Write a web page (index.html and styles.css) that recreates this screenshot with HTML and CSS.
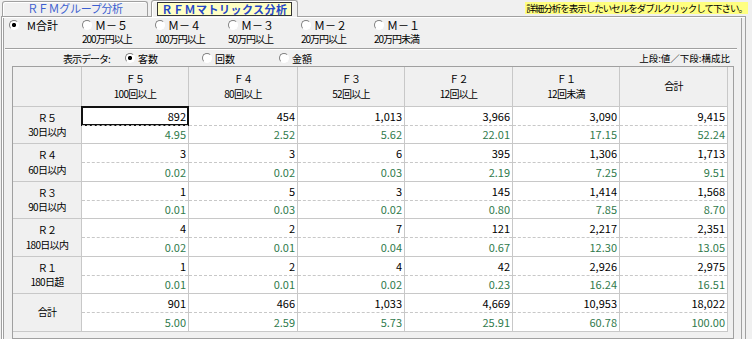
FILE: index.html
```html
<!DOCTYPE html>
<html lang="ja">

<head>
  <meta charset="UTF-8">
  <title>ＲＦＭマトリックス分析</title>
  <link rel="stylesheet" href="styles.css">
</head>

<body>

  <div class="tabs">
    <div class="tab">ＲＦＭグループ分析</div>
    <div class="tab active"><span class="tab-label">ＲＦＭマトリックス分析</span></div>
    <div class="hint">詳細分析を表示したいセルをダブルクリックして下さい。</div>
  </div>

  <div class="panel">
    <div class="m-row">
      <div class="opt first"><div class="opt-main"><span class="radio on"></span>M合計</div></div>
      <div class="opt"><div class="opt-main"><span class="radio"></span>Ｍ－５</div><small>200万円以上</small></div>
      <div class="opt"><div class="opt-main"><span class="radio"></span>Ｍ－４</div><small>100万円以上</small></div>
      <div class="opt"><div class="opt-main"><span class="radio"></span>Ｍ－３</div><small>50万円以上</small></div>
      <div class="opt"><div class="opt-main"><span class="radio"></span>Ｍ－２</div><small>20万円以上</small></div>
      <div class="opt"><div class="opt-main"><span class="radio"></span>Ｍ－１</div><small>20万円未満</small></div>
    </div>
    <div class="sep"></div>

    <div class="disp-row">
      <span class="disp-label">表示データ:</span>
      <span class="opt2"><span class="radio on"></span>客数</span>
      <span class="opt2"><span class="radio"></span>回数</span>
      <span class="opt2"><span class="radio"></span>金額</span>
      <span class="legend">上段:値／下段:構成比</span>
    </div>

    <div class="grid-box">
      <div class="matrix">
        <div class="h"></div>
        <div class="h"><span>Ｆ５</span><span>100回以上</span></div>
        <div class="h"><span>Ｆ４</span><span>80回以上</span></div>
        <div class="h"><span>Ｆ３</span><span>52回以上</span></div>
        <div class="h"><span>Ｆ２</span><span>12回以上</span></div>
        <div class="h"><span>Ｆ１</span><span>12回未満</span></div>
        <div class="h"><span>合計</span></div>

        <div class="h"><span>Ｒ５</span><span>30日以内</span></div>
        <div class="d"><div class="v sel">892</div><div class="p">4.95</div></div>
        <div class="d"><div class="v">454</div><div class="p">2.52</div></div>
        <div class="d"><div class="v">1,013</div><div class="p">5.62</div></div>
        <div class="d"><div class="v">3,966</div><div class="p">22.01</div></div>
        <div class="d"><div class="v">3,090</div><div class="p">17.15</div></div>
        <div class="d"><div class="v">9,415</div><div class="p">52.24</div></div>

        <div class="h"><span>Ｒ４</span><span>60日以内</span></div>
        <div class="d"><div class="v">3</div><div class="p">0.02</div></div>
        <div class="d"><div class="v">3</div><div class="p">0.02</div></div>
        <div class="d"><div class="v">6</div><div class="p">0.03</div></div>
        <div class="d"><div class="v">395</div><div class="p">2.19</div></div>
        <div class="d"><div class="v">1,306</div><div class="p">7.25</div></div>
        <div class="d"><div class="v">1,713</div><div class="p">9.51</div></div>

        <div class="h"><span>Ｒ３</span><span>90日以内</span></div>
        <div class="d"><div class="v">1</div><div class="p">0.01</div></div>
        <div class="d"><div class="v">5</div><div class="p">0.03</div></div>
        <div class="d"><div class="v">3</div><div class="p">0.02</div></div>
        <div class="d"><div class="v">145</div><div class="p">0.80</div></div>
        <div class="d"><div class="v">1,414</div><div class="p">7.85</div></div>
        <div class="d"><div class="v">1,568</div><div class="p">8.70</div></div>

        <div class="h"><span>Ｒ２</span><span>180日以内</span></div>
        <div class="d"><div class="v">4</div><div class="p">0.02</div></div>
        <div class="d"><div class="v">2</div><div class="p">0.01</div></div>
        <div class="d"><div class="v">7</div><div class="p">0.04</div></div>
        <div class="d"><div class="v">121</div><div class="p">0.67</div></div>
        <div class="d"><div class="v">2,217</div><div class="p">12.30</div></div>
        <div class="d"><div class="v">2,351</div><div class="p">13.05</div></div>

        <div class="h"><span>Ｒ１</span><span>180日超</span></div>
        <div class="d"><div class="v">1</div><div class="p">0.01</div></div>
        <div class="d"><div class="v">2</div><div class="p">0.01</div></div>
        <div class="d"><div class="v">4</div><div class="p">0.02</div></div>
        <div class="d"><div class="v">42</div><div class="p">0.23</div></div>
        <div class="d"><div class="v">2,926</div><div class="p">16.24</div></div>
        <div class="d"><div class="v">2,975</div><div class="p">16.51</div></div>

        <div class="h"><span>合計</span></div>
        <div class="d"><div class="v">901</div><div class="p">5.00</div></div>
        <div class="d"><div class="v">466</div><div class="p">2.59</div></div>
        <div class="d"><div class="v">1,033</div><div class="p">5.73</div></div>
        <div class="d"><div class="v">4,669</div><div class="p">25.91</div></div>
        <div class="d"><div class="v">10,953</div><div class="p">60.78</div></div>
        <div class="d"><div class="v">18,022</div><div class="p">100.00</div></div>
      </div>
    </div>
  </div>

</body>

</html>
```

FILE: styles.css
```css
body {
  margin: 0;
  background: #f0f0f0;
  font-family: "Noto Sans CJK JP", "Liberation Sans", sans-serif;
  font-size: 11px;
  color: #000;
  overflow: hidden;
}

/* tab strip */
.tabs {
  display: flex;
  align-items: flex-end;
  height: 16px;
}

.tab {
  box-sizing: border-box;
  margin-left: 2px;
  width: 146px;
  height: 15px;
  border: 1px solid #a0a0a0;
  border-bottom: 0;
  border-radius: 3px 3px 0 0;
  box-shadow: inset 1px 1px 0 #fff;
  color: #3c5fd0;
  font-size: 11px;
  line-height: 13px;
  text-align: center;
  letter-spacing: -0.3px;
}

.tab.active {
  position: relative;
  z-index: 1;
  margin-left: 3px;
  margin-bottom: -1px;
  width: 147px;
  height: 17px;
  padding-top: 1px;
  background: #f0f0f0;
}

.tab-label {
  display: inline-block;
  padding: 0 3px;
  background: #ffffc4;
  border: 1px solid #333;
  color: #2548c8;
  font-weight: bold;
  line-height: 12px;
  letter-spacing: 0.5px;
}

.hint {
  align-self: flex-start;
  margin: 2px 4px 0 auto;
  padding: 0 1px;
  background: #ffff80;
  font-size: 9.5px;
  line-height: 12px;
  letter-spacing: -1px;
}

/* tab page */
.panel {
  box-sizing: border-box;
  width: 745px;
  height: 330px;
  margin-left: 1px;
  border: 1px solid #a0a0a0;
  box-shadow: inset 1px 1px 0 #fff, inset 2px 0 0 #a0a0a0, inset -3px 0 0 #f0f0f0, inset -4px 0 0 #a0a0a0;
}

.radio {
  flex: none;
  box-sizing: border-box;
  width: 10px;
  height: 10px;
  border: 1px solid;
  border-color: #808080 #fff #fff #808080;
  border-radius: 50%;
  background: #fff;
}

.radio.on {
  background: radial-gradient(circle, #000 1.8px, #fff 2.4px);
}

.m-row {
  display: grid;
  grid-template-columns: repeat(6, 73px);
  height: 31px;
  padding-left: 7px;
}

.opt-main {
  display: flex;
  align-items: center;
  gap: 3px;
  height: 15px;
}

.opt.first .opt-main {
  gap: 8px;
}

.opt small {
  display: block;
  margin-top: 1px;
  font-size: 10px;
  line-height: 12px;
  letter-spacing: -1px;
}

.sep {
  margin: 0 8px 0 3px;
  border-top: 1px solid #a0a0a0;
  border-bottom: 1px solid #fff;
}

.disp-row {
  display: flex;
  align-items: center;
  height: 16px;
  padding-left: 61px;
  font-size: 10px;
}

.disp-label {
  width: 62px;
  letter-spacing: -1px;
}

.opt2 {
  display: flex;
  align-items: center;
  gap: 3px;
  width: 77px;
}

.legend {
  margin: 0 15px 0 auto;
  font-size: 9.5px;
}

/* matrix grid */
.grid-box {
  box-sizing: border-box;
  width: 722px;
  height: 273px;
  margin-left: 10px;
  border: 1px solid #a0a0a0;
  background: #f0f0f0;
}

.matrix {
  display: grid;
  grid-template-columns: 69px 107px 109px 107px 108px 107px 108px;
  grid-template-rows: 40px repeat(3, 37px 38px);
}

.matrix>div {
  box-sizing: border-box;
  border-right: 1px solid #c8c8c8;
  border-bottom: 1px solid #c8c8c8;
}

.h {
  display: flex;
  flex-direction: column;
  align-items: center;
  justify-content: center;
  background: #f0f0f0;
  font-size: 10px;
  line-height: 14.5px;
  letter-spacing: -0.7px;
}

.d {
  display: flex;
  flex-direction: column;
  background: #fff;
}

.v,
.p {
  flex: 1;
  display: flex;
  align-items: center;
  justify-content: flex-end;
  padding-right: 2px;
}

.p {
  border-top: 1px dashed #c8c8c8;
  color: #2f7a4c;
}

.v.sel {
  outline: 2px solid #111;
  outline-offset: -1px;
}
```
